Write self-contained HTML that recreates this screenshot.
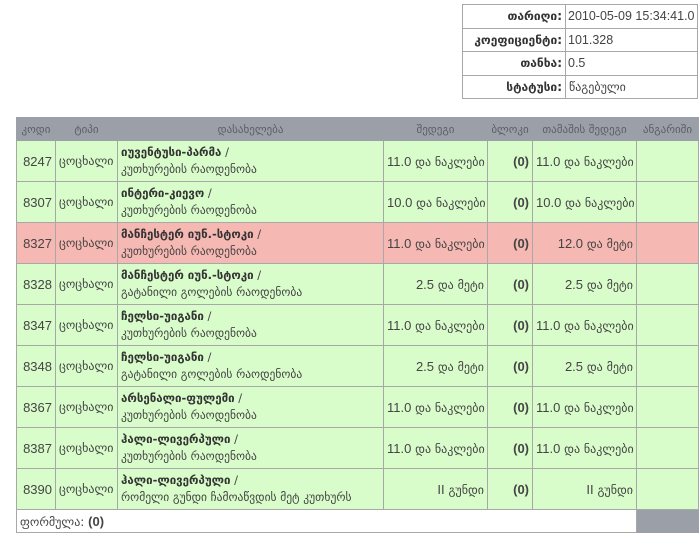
<!DOCTYPE html>
<html><head><meta charset="utf-8"><style>
body{margin:0;background:#fff;font-family:"DejaVu Sans","Liberation Sans",sans-serif;color:#444;font-size:12px}
table{border-collapse:collapse;table-layout:fixed;position:absolute}
td,th{border:1px solid #a8a8a8;padding:0 3px;white-space:nowrap;overflow:hidden}
#info{left:462px;top:4px;width:236px}
#info td{height:22.5px;font-size:12px}
#info td.l{text-align:right;font-weight:bold;color:#333;width:96px}
#info td.v{font-family:"Liberation Sans","DejaVu Sans",sans-serif;font-size:12.5px;padding:0 2px}
#main{left:16px;top:117px;width:682px}
#main th{background:#9b9fa7;color:#5a5e66;font-weight:normal;height:22px;font-size:11px;border-color:#9b9fa7}
#main tr.g td{background:#d9fccb;height:40px}
#main tr.r td{background:#f6b8b3;height:40px}
.n{font-family:"Liberation Sans",sans-serif;font-size:13px;text-align:right}
.c{text-align:center}
.nm{font-size:11.5px;line-height:17px}
.nm b{color:#333}
.b{font-family:"Liberation Sans",sans-serif;font-weight:bold;font-size:13px;text-align:right}
.res{text-align:right;font-size:12px}
.res span,.f span{font-family:"Liberation Sans",sans-serif;font-size:13px}
</style></head><body>
<table id="info">
<tr><td class="l">თარიღი:</td><td class="v">2010-05-09 15:34:41.0</td></tr>
<tr><td class="l">კოეფიციენტი:</td><td class="v">101.328</td></tr>
<tr><td class="l">თანხა:</td><td class="v">0.5</td></tr>
<tr><td class="l">სტატუსი:</td><td>წაგებული</td></tr>
</table>
<table id="main">
<colgroup><col style="width:39px"><col style="width:62px"><col style="width:266px"><col style="width:104px"><col style="width:45px"><col style="width:104px"><col style="width:62px"></colgroup>
<tr><th>კოდი</th><th>ტიპი</th><th>დასახელება</th><th>შედეგი</th><th>ბლოკი</th><th>თამაშის შედეგი</th><th>ანგარიში</th></tr>
<tr class="g"><td class="n">8247</td><td>ცოცხალი</td><td class="nm"><b>იუვენტუსი-პარმა</b> /<br>კუთხურების რაოდენობა</td><td class="res"><span>11.0</span> და ნაკლები</td><td class="b">(0)</td><td class="res"><span>11.0</span> და ნაკლები</td><td></td></tr>
<tr class="g"><td class="n">8307</td><td>ცოცხალი</td><td class="nm"><b>ინტერი-კიევო</b> /<br>კუთხურების რაოდენობა</td><td class="res"><span>10.0</span> და ნაკლები</td><td class="b">(0)</td><td class="res"><span>10.0</span> და ნაკლები</td><td></td></tr>
<tr class="r"><td class="n">8327</td><td>ცოცხალი</td><td class="nm"><b>მანჩესტერ იუნ.-სტოკი</b> /<br>კუთხურების რაოდენობა</td><td class="res"><span>11.0</span> და ნაკლები</td><td class="b">(0)</td><td class="res"><span>12.0</span> და მეტი</td><td></td></tr>
<tr class="g"><td class="n">8328</td><td>ცოცხალი</td><td class="nm"><b>მანჩესტერ იუნ.-სტოკი</b> /<br>გატანილი გოლების რაოდენობა</td><td class="res"><span>2.5</span> და მეტი</td><td class="b">(0)</td><td class="res"><span>2.5</span> და მეტი</td><td></td></tr>
<tr class="g"><td class="n">8347</td><td>ცოცხალი</td><td class="nm"><b>ჩელსი-უიგანი</b> /<br>კუთხურების რაოდენობა</td><td class="res"><span>11.0</span> და ნაკლები</td><td class="b">(0)</td><td class="res"><span>11.0</span> და ნაკლები</td><td></td></tr>
<tr class="g"><td class="n">8348</td><td>ცოცხალი</td><td class="nm"><b>ჩელსი-უიგანი</b> /<br>გატანილი გოლების რაოდენობა</td><td class="res"><span>2.5</span> და მეტი</td><td class="b">(0)</td><td class="res"><span>2.5</span> და მეტი</td><td></td></tr>
<tr class="g"><td class="n">8367</td><td>ცოცხალი</td><td class="nm"><b>არსენალი-ფულემი</b> /<br>კუთხურების რაოდენობა</td><td class="res"><span>11.0</span> და ნაკლები</td><td class="b">(0)</td><td class="res"><span>11.0</span> და ნაკლები</td><td></td></tr>
<tr class="g"><td class="n">8387</td><td>ცოცხალი</td><td class="nm"><b>ჰალი-ლივერპული</b> /<br>კუთხურების რაოდენობა</td><td class="res"><span>11.0</span> და ნაკლები</td><td class="b">(0)</td><td class="res"><span>11.0</span> და ნაკლები</td><td></td></tr>
<tr class="g"><td class="n">8390</td><td>ცოცხალი</td><td class="nm"><b>ჰალი-ლივერპული</b> /<br>რომელი გუნდი ჩამოაწვდის მეტ კუთხურს</td><td class="res"><span>II</span> გუნდი</td><td class="b">(0)</td><td class="res"><span>II</span> გუნდი</td><td></td></tr>
<tr><td colspan="6" class="f" style="height:22px">ფორმულა: <b><span>(0)</span></b></td><td style="background:#9b9fa7;border-color:#9b9fa7"></td></tr>
</table>
</body></html>
